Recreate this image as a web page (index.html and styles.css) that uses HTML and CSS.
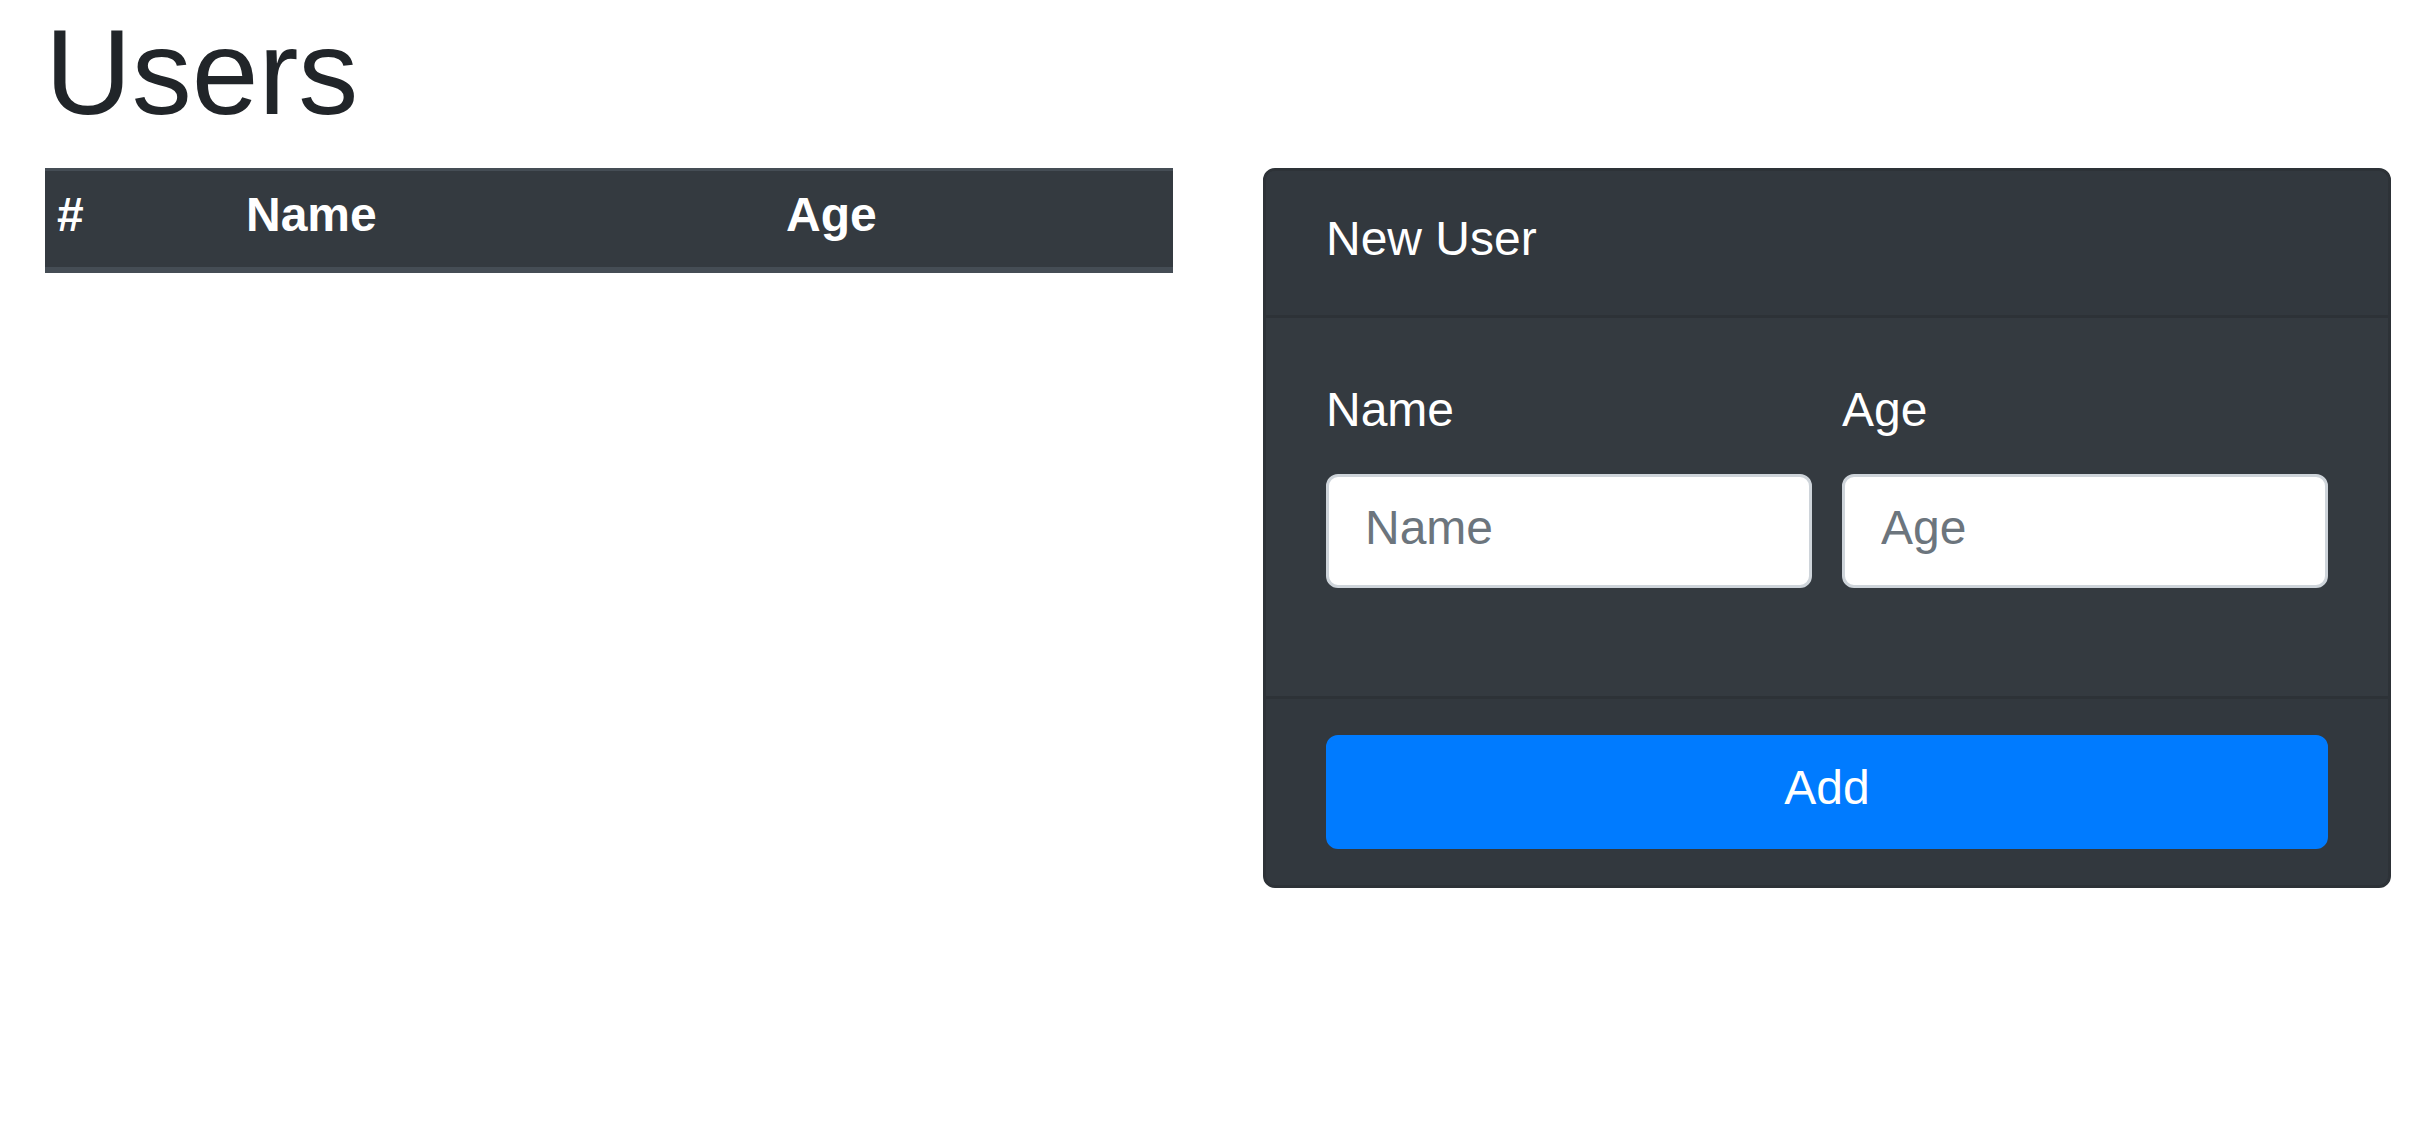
FILE: index.html
```html
<!DOCTYPE html>
<html lang="en">
<head>
<meta charset="utf-8">
<title>Users</title>
<link rel="stylesheet" href="styles.css">
</head>
<body>
<div class="page">
  <h1 class="title">Users</h1>
  <div class="row">
    <div class="col">
      <table class="users">
        <thead>
          <tr>
            <th class="c-id">#</th>
            <th class="c-name">Name</th>
            <th class="c-age">Age</th>
          </tr>
        </thead>
        <tbody></tbody>
      </table>
    </div>
    <div class="col">
      <div class="card">
        <div class="card-header">New User</div>
        <div class="card-body">
          <div class="form-row">
            <div class="field">
              <label class="label" for="name">Name</label>
              <input class="input" id="name" type="text" placeholder="Name">
            </div>
            <div class="field">
              <label class="label" for="age">Age</label>
              <input class="input" id="age" type="text" placeholder="Age">
            </div>
          </div>
        </div>
        <div class="card-footer">
          <button class="btn" type="button">Add</button>
        </div>
      </div>
    </div>
  </div>
</div>
</body>
</html>
```

FILE: styles.css
```css
* { box-sizing: border-box; }

html, body {
  margin: 0;
  padding: 0;
  background: #ffffff;
}

body {
  font-family: "Liberation Sans", Arial, sans-serif;
  font-size: 48px;
  line-height: 1.5;
  color: #212529;
}

.page {
  padding: 0 45px;
}

.title {
  margin: 0 0 24px 0;
  font-size: 120px;
  line-height: 1.2;
  font-weight: 500;
  color: #212529;
}

.row {
  display: grid;
  grid-template-columns: 1fr 1fr;
  column-gap: 90px;
  align-items: start;
}

.col {
  min-width: 0;
}

/* table */
.users {
  width: 100%;
  border-collapse: separate;
  border-spacing: 0;
  table-layout: fixed;
  background: #343a40;
  color: #ffffff;
}

.users th {
  padding: 8px 12px 16px 12px;
  line-height: 72px;
  font-size: 48px;
  font-weight: 700;
  text-align: left;
  vertical-align: bottom;
  border-top: 3px solid #454d55;
  border-bottom: 6px solid #454d55;
}

.users .c-id { width: 189px; }
.users .c-name { width: 540px; }

/* card */
.card {
  background: #343a40;
  color: #ffffff;
  border: 3px solid #2d3237;
  border-radius: 12px;
  overflow: hidden;
}

.card-header {
  padding: 32px 60px 40px 60px;
  line-height: 72px;
  background: #32383e;
  border-bottom: 3px solid #2d3237;
}

.card-body {
  padding: 60px;
}

.form-row {
  display: grid;
  grid-template-columns: 1fr 1fr;
  column-gap: 30px;
}

.field {
  margin-bottom: 48px;
  min-width: 0;
}

.label {
  display: block;
  line-height: 64px;
  padding-bottom: 8px;
  margin-bottom: 24px;
}

.input {
  display: block;
  width: 100%;
  height: 114px;
  padding: 14px 36px 22px 36px;
  font-family: "Liberation Sans", Arial, sans-serif;
  font-size: 48px;
  line-height: 72px;
  color: #495057;
  background: #ffffff;
  border: 3px solid #ced4da;
  border-radius: 12px;
  outline: none;
}

.input::placeholder {
  color: #6c757d;
  opacity: 1;
}

.card-footer {
  padding: 36px 60px;
  background: #32383e;
  border-top: 3px solid #2d3237;
}

.btn {
  display: block;
  width: 100%;
  height: 114px;
  padding: 14px 36px 22px 36px;
  font-family: "Liberation Sans", Arial, sans-serif;
  font-size: 48px;
  line-height: 72px;
  color: #ffffff;
  background: #007bff;
  border: 3px solid #007bff;
  border-radius: 12px;
  text-align: center;
  cursor: pointer;
}
```
